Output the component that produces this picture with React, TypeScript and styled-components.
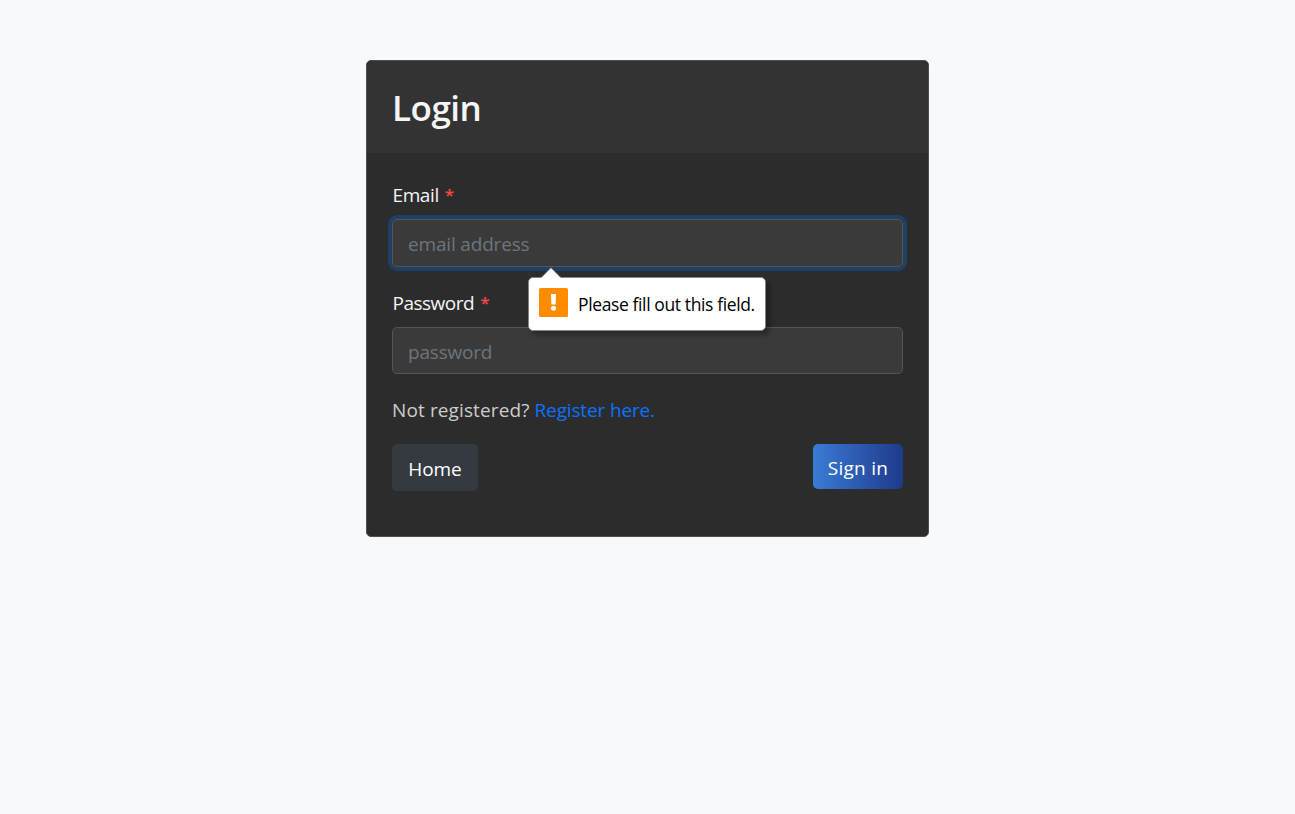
import React from "react";
import styled, { createGlobalStyle } from "styled-components";

const GlobalStyle = createGlobalStyle`
  * { box-sizing: border-box; }
  body {
    margin: 0;
    min-height: 100vh;
    background: #f8f9fb;
    font-family: "Segoe UI", "Open Sans", "Noto Sans", sans-serif;
    font-size: 19px;
    color: #f5f5f5;
  }
`;

const Page = styled.main`
  display: flex;
  justify-content: center;
  padding-top: 60px;
`;

const Card = styled.section`
  width: 563px;
  height: 477px;
  border: 1px solid #495057;
  border-radius: 5px;
  background: #2c2c2c;
  overflow: hidden;
`;

const CardHeader = styled.header`
  height: 92px;
  padding: 21px 25px 0;
  background: #333333;
`;

const Title = styled.h1`
  margin: 0;
  font-size: 35px;
  font-weight: 600;
  line-height: 52px;
  letter-spacing: -0.5px;
`;

const Form = styled.form`
  padding: 26px 25px 0;
`;

const Field = styled.div`
  position: relative;
  margin-bottom: 20px;
`;

const Label = styled.label<{ $spacing: number }>`
  display: flex;
  gap: 6px;
  height: 40px;
  padding-left: 0.5px;
  line-height: 32px;
  letter-spacing: ${(p) => p.$spacing}px;
`;

const Required = styled.span`
  color: #ff4444;
  font-size: 17px;
  font-weight: 600;
`;

const Input = styled.input<{ $focused?: boolean; $spacing: number }>`
  display: block;
  width: 100%;
  height: ${(p) => (p.$focused ? 48 : 47)}px;
  padding: 2px 15px 0;
  border: 1px solid #555555;
  border-radius: 5px;
  outline: none;
  background: #3a3a3a;
  color: #f5f5f5;
  font: inherit;
  letter-spacing: ${(p) => p.$spacing}px;
  box-shadow: ${(p) => (p.$focused ? "0 0 0 4px #1f3f64" : "none")};
  &::placeholder {
    color: #6c757d;
    opacity: 1;
  }
`;

const Tooltip = styled.div`
  position: absolute;
  z-index: 1;
  top: 98px;
  left: 136px;
  display: flex;
  align-items: flex-start;
  width: 238px;
  height: 54px;
  padding: 10px;
  border: 1px solid #858585;
  border-radius: 5px;
  background: #ffffff;
  color: #000000;
  box-shadow: 4px 4px 5px rgba(0, 0, 0, 0.3);
`;

const Arrow = styled.svg`
  position: absolute;
  top: -11px;
  left: 12px;
`;

const WarningIcon = styled.svg`
  flex: none;
`;

const TooltipText = styled.span`
  margin-left: 10px;
  font-size: 17.5px;
  line-height: 33px;
  letter-spacing: -0.38px;
  white-space: nowrap;
`;

const Register = styled.p`
  margin: 0 0 18px;
  height: 32px;
  line-height: 32px;
  color: #cccccc;
  display: flex;
  gap: 5px;
  white-space: nowrap;
`;

const Run = styled.span<{ $spacing: number }>`
  letter-spacing: ${(p) => p.$spacing}px;
`;

const Link = styled.a`
  color: #0b72ff;
  letter-spacing: -0.15px;
  text-decoration: none;
`;

const Actions = styled.div`
  display: flex;
  align-items: flex-start;
  justify-content: space-between;
`;

const Button = styled.button<{ $primary?: boolean }>`
  width: ${(p) => (p.$primary ? 90 : 86)}px;
  height: ${(p) => (p.$primary ? 45 : 47)}px;
  padding: 2px 0 0;
  border: 0;
  border-radius: 5px;
  background: ${(p) => (p.$primary ? "linear-gradient(to right, #3a7bd5, #1e3a8a)" : "#343a40")};
  color: #ffffff;
  font: inherit;
  white-space: nowrap;
`;

export default function App() {
  return (
    <>
      <GlobalStyle />
      <Page>
        <Card>
          <CardHeader>
            <Title>Login</Title>
          </CardHeader>
          <Form onSubmit={(e) => e.preventDefault()} noValidate>
            <Field>
              <Label htmlFor="email" $spacing={-0.4}>
                Email <Required>*</Required>
              </Label>
              <Input id="email" type="email" placeholder="email address" $focused $spacing={-0.17} />
              <Tooltip role="alert">
                <Arrow width="20" height="12" viewBox="0 0 20 12">
                  <path d="M0 11 10 1 20 11V12H0Z" fill="#fff" />
                  <path d="M0 10.5 10 .5 20 10.5" fill="none" stroke="#858585" strokeWidth=".5" />
                </Arrow>
                <WarningIcon width="29" height="29" viewBox="0 0 29 29">
                  <rect width="29" height="29" rx="1.5" fill="#ff8c00" />
                  <path d="M12 6h5l-.4 10.5h-4.2Z" fill="#fff" />
                  <circle cx="14.5" cy="20.3" r="2.5" fill="#fff" />
                </WarningIcon>
                <TooltipText>Please fill out this field.</TooltipText>
              </Tooltip>
            </Field>
            <Field>
              <Label htmlFor="password" $spacing={-0.5}>
                Password <Required>*</Required>
              </Label>
              <Input id="password" type="password" placeholder="password" $spacing={-0.2} />
            </Field>
            <Register>
              <Run $spacing={0.12}>Not registered?</Run>
              <Link href="#">Register here.</Link>
            </Register>
            <Actions>
              <Button type="button">
                <Run $spacing={-0.1}>Home</Run>
              </Button>
              <Button type="submit" $primary>
                <Run $spacing={0.25}>Sign in</Run>
              </Button>
            </Actions>
          </Form>
        </Card>
      </Page>
    </>
  );
}
